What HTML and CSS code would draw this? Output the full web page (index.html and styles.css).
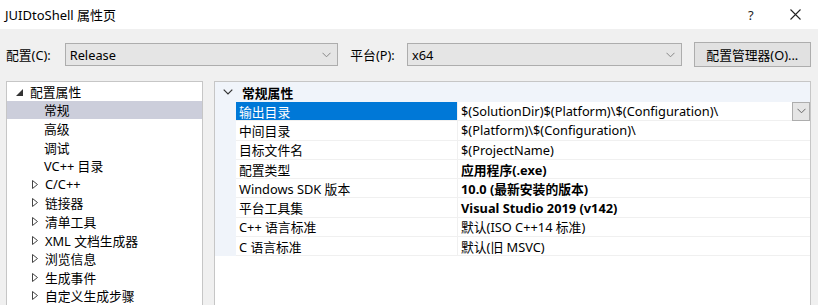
FILE: index.html
```html
<!DOCTYPE html>
<html lang="zh-CN">
<head>
    <meta charset="UTF-8">
    <title>JUIDtoShell 属性页</title>
    <link rel="stylesheet" href="styles.css">
</head>
<body>
    <div class="titlebar">
        <span class="title">JUIDtoShell 属性页</span>
        <span class="help">?</span>
        <span class="close">
            <svg width="11" height="11" viewBox="0 0 11 11"><path d="M0.5 0.5L10.5 10.5M10.5 0.5L0.5 10.5" stroke="#222" stroke-width="1.1" fill="none"/></svg>
        </span>
    </div>

    <div class="toolbar">
        <label class="lbl">配置(C):</label>
        <div class="combo combo-config">
            <span>Release</span>
            <svg class="arrow" width="9" height="6" viewBox="0 0 9 6"><path d="M0.5 0.8L4.5 4.8L8.5 0.8" stroke="#888" fill="none"/></svg>
        </div>
        <label class="lbl lbl-platform">平台(P):</label>
        <div class="combo combo-platform">
            <span>x64</span>
            <svg class="arrow" width="9" height="6" viewBox="0 0 9 6"><path d="M0.5 0.8L4.5 4.8L8.5 0.8" stroke="#888" fill="none"/></svg>
        </div>
        <button class="btn">配置管理器(O)...</button>
    </div>

    <div class="main">
        <!-- tree on the left -->
        <div class="tree">
            <div class="node root">
                <svg class="tri" width="7" height="7" viewBox="0 0 7 7"><path d="M7 0L7 7L0 7Z" fill="#333"/></svg>
                配置属性
            </div>
            <div class="node child selected">常规</div>
            <div class="node child">高级</div>
            <div class="node child">调试</div>
            <div class="node child">VC++ 目录</div>
            <div class="node group"><svg class="tri" width="6" height="9" viewBox="0 0 6 9"><path d="M0.5 0.5L5.5 4.5L0.5 8.5Z" stroke="#444" fill="none"/></svg>C/C++</div>
            <div class="node group"><svg class="tri" width="6" height="9" viewBox="0 0 6 9"><path d="M0.5 0.5L5.5 4.5L0.5 8.5Z" stroke="#444" fill="none"/></svg>链接器</div>
            <div class="node group"><svg class="tri" width="6" height="9" viewBox="0 0 6 9"><path d="M0.5 0.5L5.5 4.5L0.5 8.5Z" stroke="#444" fill="none"/></svg>清单工具</div>
            <div class="node group"><svg class="tri" width="6" height="9" viewBox="0 0 6 9"><path d="M0.5 0.5L5.5 4.5L0.5 8.5Z" stroke="#444" fill="none"/></svg>XML 文档生成器</div>
            <div class="node group"><svg class="tri" width="6" height="9" viewBox="0 0 6 9"><path d="M0.5 0.5L5.5 4.5L0.5 8.5Z" stroke="#444" fill="none"/></svg>浏览信息</div>
            <div class="node group"><svg class="tri" width="6" height="9" viewBox="0 0 6 9"><path d="M0.5 0.5L5.5 4.5L0.5 8.5Z" stroke="#444" fill="none"/></svg>生成事件</div>
            <div class="node group"><svg class="tri" width="6" height="9" viewBox="0 0 6 9"><path d="M0.5 0.5L5.5 4.5L0.5 8.5Z" stroke="#444" fill="none"/></svg>自定义生成步骤</div>
        </div>

        <!-- property grid -->
        <div class="grid">
            <div class="section">
                <svg class="chev" width="10" height="6" viewBox="0 0 10 6"><path d="M0.7 0.7L5 5L9.3 0.7" stroke="#333" stroke-width="1.2" fill="none"/></svg>
                <span>常规属性</span>
            </div>
            <div class="rows">
                <div class="row active">
                    <div class="name">输出目录</div>
                    <div class="value"><span class="text">$(SolutionDir)$(Platform)\$(Configuration)\</span><span class="drop"><svg width="9" height="6" viewBox="0 0 9 6"><path d="M0.5 0.8L4.5 4.8L8.5 0.8" stroke="#666" fill="none"/></svg></span></div>
                </div>
                <div class="row"><div class="name">中间目录</div><div class="value">$(Platform)\$(Configuration)\</div></div>
                <div class="row"><div class="name">目标文件名</div><div class="value">$(ProjectName)</div></div>
                <div class="row"><div class="name">配置类型</div><div class="value bold">应用程序(.exe)</div></div>
                <div class="row"><div class="name">Windows SDK 版本</div><div class="value bold">10.0 (最新安装的版本)</div></div>
                <div class="row"><div class="name">平台工具集</div><div class="value bold">Visual Studio 2019 (v142)</div></div>
                <div class="row"><div class="name">C++ 语言标准</div><div class="value">默认(ISO C++14 标准)</div></div>
                <div class="row"><div class="name">C 语言标准</div><div class="value">默认(旧 MSVC)</div></div>
            </div>
        </div>
    </div>
</body>
</html>
```

FILE: styles.css
```css
html, body {
    overflow: hidden;
}
body {
    margin: 0;
    background: #f0f0f0;
    font-family: "Noto Sans", "Noto Sans CJK SC", sans-serif;
    font-size: 12.8px;
    color: #000;
    height: 305px;
}

.titlebar {
    height: 29px;
    background: #fff;
    display: flex;
    align-items: center;
    padding-left: 5px;
}
.title {
    flex: 1;
    font-size: 13px;
}
.help {
    width: 16px;
    margin-right: 26px;
    font-size: 13px;
    color: #222;
}
.close {
    width: 12px;
    margin-right: 16px;
    display: flex;
}

.toolbar {
    display: flex;
    align-items: center;
    padding: 14px 7px 0 6px;
    height: 23px;
}
.lbl {
    width: 59px;
}
.lbl-platform {
    margin-left: 12px;
    width: 57px;
}
.combo {
    height: 21px;
    border: 1px solid #adadad;
    background: #e5e5e5;
    display: flex;
    align-items: center;
    padding: 0 4px;
    box-sizing: content-box;
}
.combo span {
    flex: 1;
}
.combo .arrow {
    margin-right: 2px;
}
.combo-config {
    width: 265px;
}
.combo-platform {
    width: 266px;
}
.btn {
    margin-left: 12px;
    width: 118px;
    height: 25px;
    border: 1px solid #adadad;
    background: #e1e1e1;
    font-family: inherit;
    font-size: 12.8px;
    color: #000;
    padding: 0;
}

.main {
    display: flex;
    gap: 11px;
    padding: 15px 7px 0 6px;
    height: 224px;
    overflow: hidden;
}
.tree {
    width: 195px;
    height: 240px;
    background: #fff;
    border: 1px solid #c6c6c6;
    flex-shrink: 0;
}
.node {
    height: 18.6px;
    display: flex;
    align-items: center;
    white-space: nowrap;
}
.root {
    padding-left: 9px;
}
.root .tri {
    margin-right: 7px;
    margin-top: 2px;
}
.child {
    padding-left: 37px;
}
.group {
    padding-left: 25px;
}
.group .tri {
    margin-right: 7px;
}
.selected {
    background: #cccedb;
}

.grid {
    flex: 1;
    height: 240px;
    background: #fff;
    border: 1px solid #c6c6c6;
}
.section {
    height: 20px;
    background: #f0f4fa;
    display: flex;
    align-items: center;
    font-weight: bold;
}
.section .chev {
    margin: 0 9px 0 8px;
}
.rows {
    background: #f0f4fa;
    padding-left: 21px;
}
.row {
    display: flex;
    height: 19.3px;
    background: #fff;
    box-sizing: border-box;
    border-bottom: 1px solid #f0f0f0;
}
.name {
    width: 218px;
    padding-left: 3px;
    border-right: 1px solid #f0f0f0;
    display: flex;
    align-items: center;
    white-space: nowrap;
}
.value {
    flex: 1;
    padding-left: 3px;
    display: flex;
    align-items: center;
    white-space: nowrap;
}
.value .text {
    flex: 1;
}
.bold {
    font-weight: bold;
}
.row.active .name {
    background: #0078d7;
    color: #fff;
}
.drop {
    width: 16px;
    height: 17px;
    border: 1px solid #adadad;
    background: #e5e5e5;
    display: flex;
    align-items: center;
    justify-content: center;
}
```
